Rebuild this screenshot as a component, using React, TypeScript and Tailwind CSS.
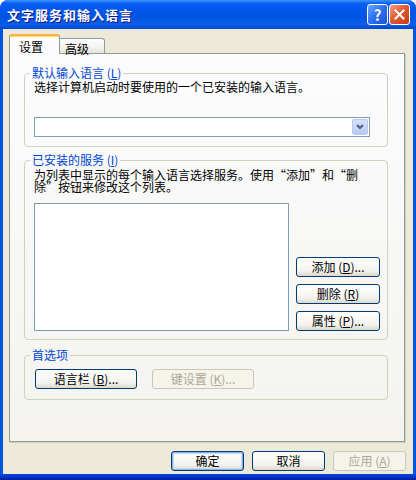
import type { ReactNode } from "react"

function XpButton({
  children,
  className = "",
  disabled = false,
  isDefault = false,
}: {
  children: ReactNode
  className?: string
  disabled?: boolean
  isDefault?: boolean
}) {
  const look = disabled
    ? "border-[#C9C7BA] text-[#ACA899] bg-[#F5F4EA]"
    : "border-[#003C74] text-black bg-[linear-gradient(to_bottom,#ffffff,#f4f3ee_70%,#dcd8cc)]"
  const ring = isDefault ? "shadow-[inset_0_0_0_1px_#8fb0e8,inset_0_0_0_2px_#c4d7f7]" : ""
  return (
    <div className={`flex items-center justify-center h-[20px] rounded-[3px] border ${look} ${ring} ${className}`}>
      {children}
    </div>
  )
}

function GroupBox({ label, children, className = "" }: { label: ReactNode; children: ReactNode; className?: string }) {
  return (
    <fieldset className={`border border-[#D0D0BF] rounded-[4px] ${className}`}>
      <legend className="ml-[5px] px-[2px] text-[#0046D5] leading-[12px]">{label}</legend>
      {children}
    </fieldset>
  )
}

function TitleBar() {
  return (
    <div className="h-[29px] flex items-center rounded-t-[8px] bg-[linear-gradient(to_bottom,#3d95ff,#0a5ff0_12%,#0058ee_30%,#0054e3_60%,#0a5de8_85%,#0046d0)]">
      <span className="pl-[7px] text-white font-bold text-[13px] tracking-[1px] [text-shadow:1px_1px_0_#0a1883]">
        文字服务和输入语言
      </span>
      <div className="ml-auto mr-[6px] flex gap-[1px]">
        <div className="w-[21px] h-[21px] rounded-[3px] border border-white flex items-center justify-center bg-[linear-gradient(135deg,#6ea8ff,#2b6ef0_50%,#1d55d8)] text-white font-bold text-[15px] leading-none">
          ?
        </div>
        <div className="w-[21px] h-[21px] rounded-[3px] border border-white flex items-center justify-center bg-[linear-gradient(135deg,#f3a283,#e25c33_45%,#c23c12)]">
          <svg width="11" height="11" viewBox="0 0 11 11">
            <path d="M1.5 1.5 L9.5 9.5 M9.5 1.5 L1.5 9.5" stroke="white" strokeWidth="2" strokeLinecap="square" />
          </svg>
        </div>
      </div>
    </div>
  )
}

export default function App() {
  return (
    <div className="w-[416px] h-[480px] bg-white font-['Noto_Sans_CJK_SC',sans-serif] text-[12px] leading-[12px] text-black">
      <div className="w-full h-full flex flex-col rounded-t-[8px] bg-[#0054E3] overflow-hidden">
        <TitleBar />
        <div className="flex-1 mx-[3px] bg-[#ECE9D8] flex flex-col">
          {/* tabs */}
          <div className="mt-[5px] ml-[6px] h-[19px] flex items-end relative z-10">
            <div className="w-[51px] h-[20px] -mb-[1px] rounded-t-[3px] border-x border-[#919B9C] border-t-[2px] border-t-[#F7B33C] bg-[#FCFCFE] pt-[5px] pl-[9px] shadow-[inset_0_1px_0_#ffd770]">
              设置
            </div>
            <div className="w-[45px] h-[15px] rounded-tr-[3px] border-t border-r border-[#919B9C] bg-[linear-gradient(to_bottom,#ffffff,#f3f2ec_60%,#e6e4da)] pt-[4px] pl-[5px]">
              高级
            </div>
          </div>

          {/* tab panel */}
          <div className="ml-[6px] w-[396px] h-[389px] border border-[#919B9C] bg-[linear-gradient(to_bottom,#fcfcfe,#f4f3ee)] shadow-[1px_1px_0_#d0cebf] flex flex-col pt-[13px] pl-[14px]">
            <GroupBox label={<>默认输入语言 (<u>L</u>)</>} className="w-[364px]">
              <div className="pt-[2px] pb-[9px] pl-[9px] pr-[17px]">
                <div>选择计算机启动时要使用的一个已安装的输入语言。</div>
                <div className="mt-[24px] h-[20px] border border-[#7F9DB9] bg-white flex justify-end">
                  <div className="w-[16px] h-[16px] mt-[1px] mr-[1px] rounded-[2px] border border-[#B9CBF3] bg-[linear-gradient(to_bottom,#d6e2fd,#b8cbf6)] flex items-center justify-center">
                    <svg width="8" height="6" viewBox="0 0 8 6">
                      <path d="M1 1 L4 4 L7 1" stroke="#4D6185" strokeWidth="2" fill="none" />
                    </svg>
                  </div>
                </div>
              </div>
            </GroupBox>

            <GroupBox label={<>已安装的服务 (<u>I</u>)</>} className="w-[364px] mt-[7px]">
              <div className="pt-[3px] pb-[8px] pl-[9px]">
                <div>
                  为列表中显示的每个输入语言选择服务。使用“添加”和“删
                  <br />
                  除”按钮来修改这个列表。
                </div>
                <div className="mt-[10px] flex items-end">
                  <div className="w-[255px] h-[128px] border border-[#7F9DB9] bg-white" />
                  <div className="ml-[7px] w-[84px] flex flex-col gap-[7px]">
                    <XpButton>添加 (<u>D</u>)...</XpButton>
                    <XpButton>删除 (<u>R</u>)</XpButton>
                    <XpButton>属性 (<u>P</u>)...</XpButton>
                  </div>
                </div>
              </div>
            </GroupBox>

            <GroupBox label="首选项" className="w-[364px] mt-[9px]">
              <div className="pt-[8px] pb-[10px] pl-[10px] flex gap-[15px]">
                <XpButton className="w-[102px]">语言栏 (<u>B</u>)...</XpButton>
                <XpButton className="w-[102px]" disabled>
                  键设置 (<u>K</u>)...
                </XpButton>
              </div>
            </GroupBox>
          </div>

          {/* bottom buttons */}
          <div className="mt-[9px] pr-[7px] flex justify-end gap-[8px]">
            <XpButton className="w-[73px]" isDefault>
              确定
            </XpButton>
            <XpButton className="w-[73px]">取消</XpButton>
            <XpButton className="w-[73px]" disabled>
              应用 (<u>A</u>)
            </XpButton>
          </div>
        </div>
        <div className="h-[6px] bg-[linear-gradient(to_bottom,#0846d8,#0035c9_50%,#001c9c)]" />
      </div>
    </div>
  )
}
